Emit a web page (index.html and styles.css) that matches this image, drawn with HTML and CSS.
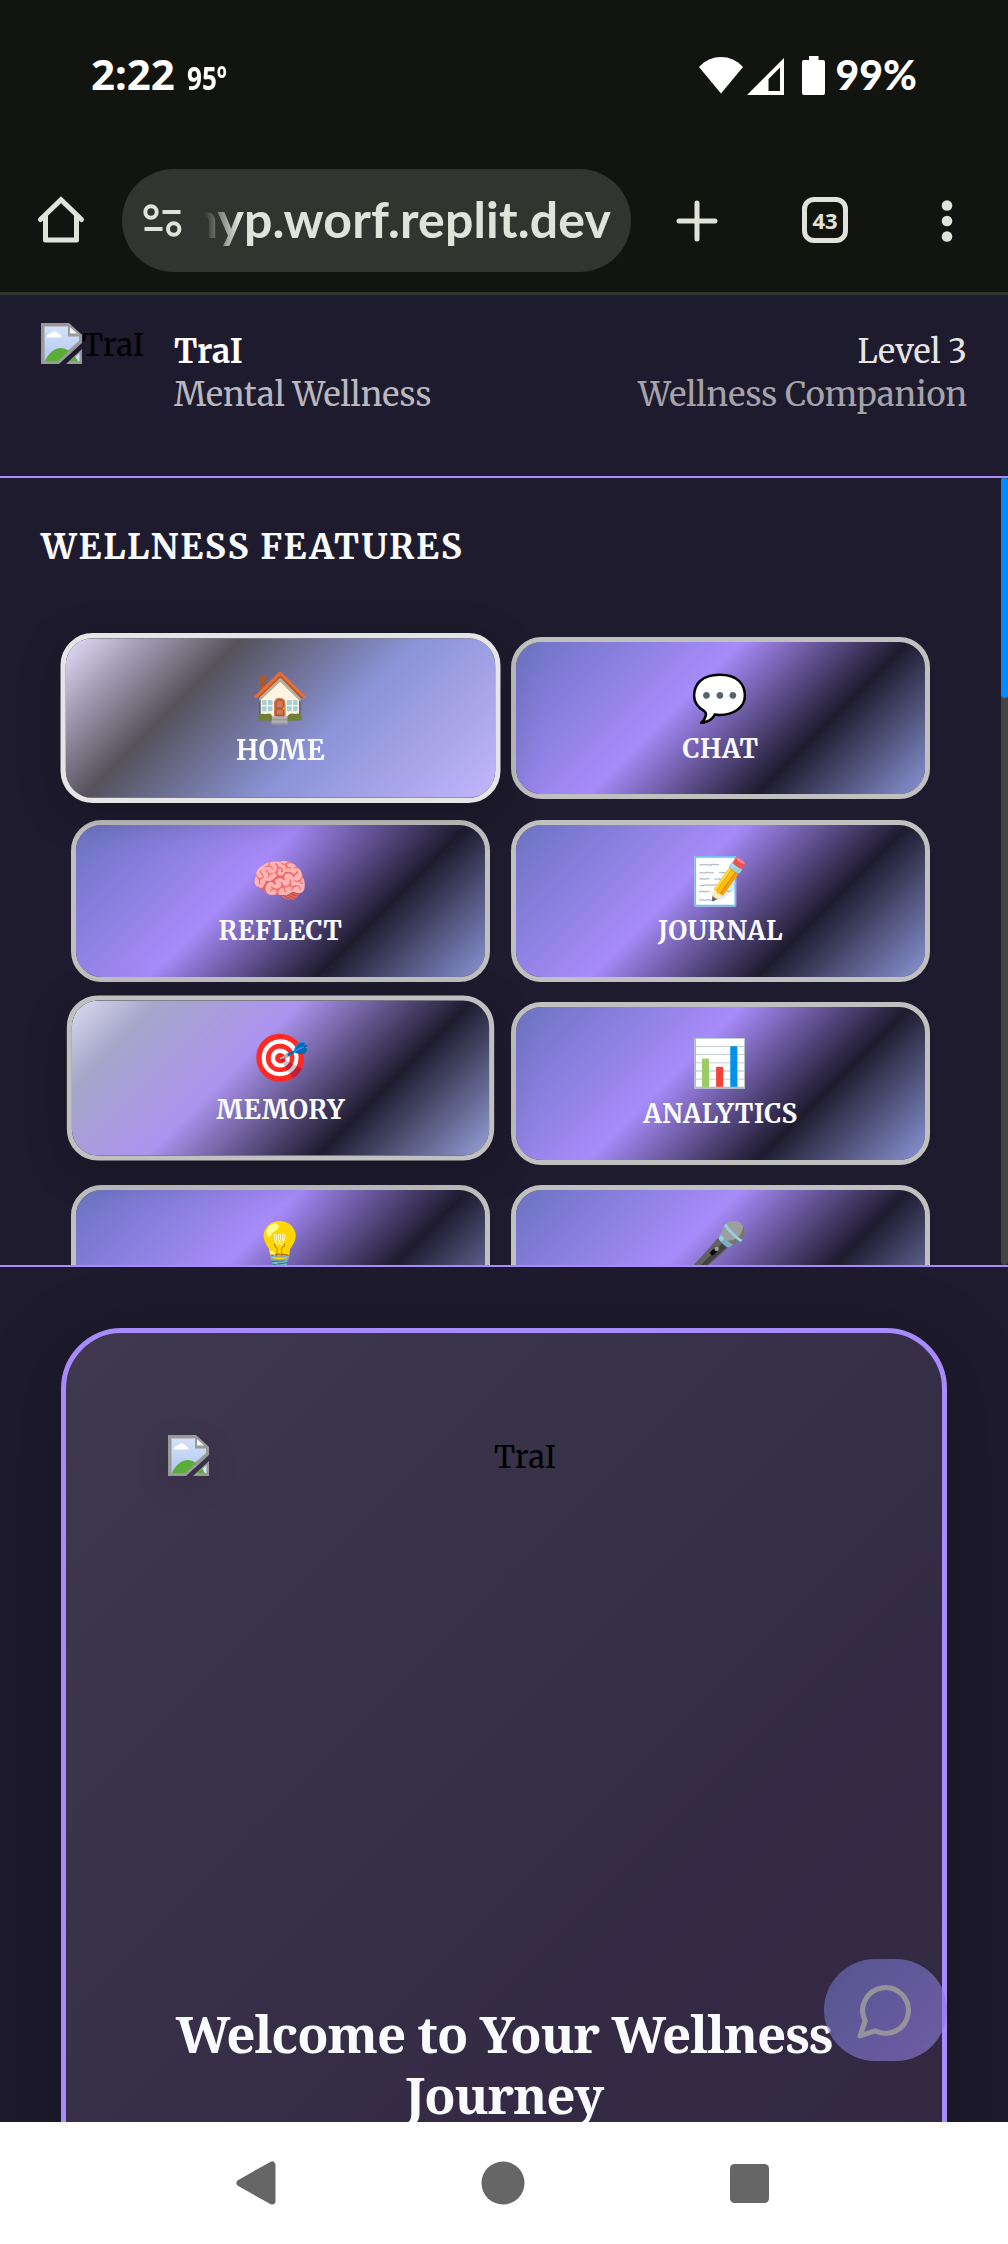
FILE: index.html
```html
<!DOCTYPE html>
<html lang="en">
<head>
<meta charset="utf-8">
<title>TraI</title>
<link rel="stylesheet" href="styles.css">
</head>
<body>
<svg class="defs" width="0" height="0" aria-hidden="true">
  <defs>
    <linearGradient id="sky" x1="0" y1="0" x2="0" y2="1">
      <stop offset="0" stop-color="#d3e1fa"/><stop offset="1" stop-color="#b4c7ee"/>
    </linearGradient>
  </defs>
  <symbol id="broken" viewBox="0 0 41 41">
    <path d="M0 0H28L41 12V20L18 41H0Z" fill="#999"/>
    <path d="M3.500 3.500H27V13.500H38V18L15 38H3.500Z" fill="url(#sky)"/>
    <path d="M4 38C8 29 14 25 20 25C23 25 26 26.500 28 28L17 38Z" fill="#5aae37"/>
    <path d="M5.500 14.500C6 11.500 8 10.500 10 10.500C11 7.500 16 7 17.500 11C19.500 11 20.500 13 20.500 14.500Z" fill="#fff"/>
    <path d="M28 2L39 11.500H28Z" fill="#f4f5f8" stroke="#999" stroke-width="2"/>
    <path d="M41 26V41H25Z" fill="#999"/>
    <path d="M38.500 30V38H30Z" fill="#d3e1fa"/>
    <path d="M29 38L34 33.500L37 38Z" fill="#5aae37"/>
  </symbol>
</svg>

<div class="status-bar">
  <div class="clock"><span class="time">2:22</span><span class="temp">95º</span></div>
  <div class="indicators">
    <svg class="wifi" width="44" height="37" viewBox="0 0 44 37"><path d="M22 36.500L0 10C12-3.300 32-3.300 44 10Z" fill="#fff"/></svg>
    <svg class="signal" width="37" height="37" viewBox="0 0 37 37"><path fill-rule="evenodd" d="M37 0V37H0ZM33 9.500L21.500 21V33H33Z" fill="#fff"/></svg>
    <svg class="battery" width="23" height="39" viewBox="0 0 23 39"><path d="M7 0H16.500V4H21Q23 4 23 6V37Q23 39 21 39H2Q0 39 0 37V6Q0 4 2 4H7Z" fill="#fff"/></svg>
    <span class="charge">99%</span>
  </div>
</div>

<div class="toolbar">
  <svg class="home" width="48" height="48" viewBox="0 0 48 48" fill="none" stroke="#e1e3da" stroke-width="5" stroke-linecap="round" stroke-linejoin="round"><path d="M3.500 23.500L24 3.700L44.500 23.500" stroke-linejoin="miter"/><path d="M8.500 20V44H39.500V20"/></svg>
  <div class="omnibox">
    <svg width="39" height="33" viewBox="0 0 39 33" fill="none" stroke="#e1e3da" stroke-width="4"><circle cx="8" cy="8" r="5.700"/><path d="M19.500 8H37.500M1.500 25H19.500"/><circle cx="30.700" cy="25" r="5.700"/></svg>
    <div class="url"><span>nyp.worf.replit.dev</span></div>
  </div>
  <svg class="plus" width="42" height="42" viewBox="0 0 42 42" stroke="#e1e3da" stroke-width="5" stroke-linecap="round"><path d="M21 3V39M3 21H39"/></svg>
  <div class="tabs">43</div>
  <svg class="dots" width="12" height="42" viewBox="0 0 12 42" fill="#e1e3da"><circle cx="6" cy="5.500" r="5.300"/><circle cx="6" cy="21" r="5.300"/><circle cx="6" cy="36.500" r="5.300"/></svg>
</div>

<header class="app-header">
  <div class="avatar"><svg width="41" height="41"><use href="#broken"/></svg><span>TraI</span></div>
  <div class="brand"><strong>TraI</strong><span>Mental Wellness</span></div>
  <div class="level"><b>Level 3</b><span>Wellness Companion</span></div>
</header>

<section class="features">
  <div class="features-body">
    <h2>WELLNESS FEATURES</h2>
    <div class="grid">
      <div class="tile active"><i>🏠</i><span>HOME</span></div>
      <div class="tile"><i>💬</i><span>CHAT</span></div>
      <div class="tile"><i>🧠</i><span>REFLECT</span></div>
      <div class="tile"><i>📝</i><span>JOURNAL</span></div>
      <div class="tile hover"><i>🎯</i><span>MEMORY</span></div>
      <div class="tile"><i>📊</i><span>ANALYTICS</span></div>
      <div class="tile"><i>💡</i></div>
      <div class="tile"><i>🎤</i></div>
    </div>
  </div>
  <div class="scrollbar"><div class="thumb"></div></div>
</section>

<main class="content">
  <div class="card">
    <div class="hero"><svg width="41" height="41"><use href="#broken"/></svg><span>TraI</span></div>
    <h1>Welcome to Your Wellness Journey</h1>
  </div>
  <div class="fab"><svg width="61" height="61" viewBox="0 0 24 24" fill="none" stroke="#d8d8d8" stroke-width="2" stroke-linecap="round" stroke-linejoin="round"><path d="M7.900 20A9 9 0 1 0 4 16.100L2 22Z"/></svg></div>
</main>

<nav class="system-nav">
  <svg width="40" height="44" viewBox="0 0 40 44"><path d="M4 22L36 4V40Z" fill="#666" stroke="#666" stroke-width="7" stroke-linejoin="round"/></svg>
  <svg width="44" height="44" viewBox="0 0 44 44"><circle cx="22" cy="22" r="21.500" fill="#666"/></svg>
  <svg width="39" height="39" viewBox="0 0 39 39"><rect width="39" height="39" rx="4.500" fill="#666"/></svg>
</nav>
</body>
</html>
```
FILE: styles.css
```css
* { box-sizing: border-box; }
body {
  margin: 0;
  width: 1008px;
  height: 2244px;
  overflow: hidden;
  display: flex;
  flex-direction: column;
  background: #1e1b2e;
  font-family: Merriweather, "Noto Serif", serif;
}
svg { display: block; flex: none; }
.defs { position: absolute; }

/* Browser and phone chrome */
.status-bar {
  height: 150px;
  flex: none;
  background: #12150f;
  color: #fff;
  padding: 0 91px;
  display: flex;
  justify-content: space-between;
}
.clock { display: flex; align-items: baseline; padding-top: 44px; }
.time { font: 700 42px/60px "Noto Sans", sans-serif; width: 96px; }
.temp {
  font: 700 33px/60px "Noto Sans", sans-serif;
  transform: scaleX(.79);
  transform-origin: 0 50%;
}
.indicators { display: flex; align-items: flex-start; padding-top: 44px; }
.wifi { margin-top: 13px; }
.signal { margin: 14px 18px 0 4px; }
.battery { margin: 12px 11px 0 0; }
.charge { font: 900 41px/62px Lato, sans-serif; }

.toolbar {
  height: 145px;
  flex: none;
  background: #12150f;
  border-bottom: 3px solid #31332d;
  padding: 19px 55px 0 37px;
  display: flex;
  align-items: flex-start;
}
.home { margin: 27px 37px 0 0; }
.omnibox {
  width: 509px;
  height: 103px;
  border-radius: 52px;
  background: #32352f;
  padding: 0 20px 0 21px;
  display: flex;
  align-items: center;
  justify-content: space-between;
}
.url {
  width: 407px;
  margin-top: -4px;
  overflow: hidden;
  display: flex;
  justify-content: flex-end;
  -webkit-mask-image: linear-gradient(90deg, transparent, #000 35px);
  mask-image: linear-gradient(90deg, transparent, #000 35px);
}
.url span {
  flex: none;
  font: 700 50px/70px Lato, sans-serif;
  letter-spacing: .150px;
  color: #e1e3da;
}
.plus { margin: 31px 84px 0 45px; }
.tabs {
  width: 46px;
  height: 46px;
  margin: 28px 93px 0 0;
  border: 5px solid #e1e3da;
  border-radius: 12px;
  color: #e1e3da;
  font: 700 22px/36px "Noto Sans", sans-serif;
  text-align: center;
}
.dots { margin-top: 31px; }

/* App header */
.app-header {
  height: 183px;
  flex: none;
  border-bottom: 2px solid #a78bfa;
  padding: 28px 41px 0;
  display: flex;
  align-items: flex-start;
}
.avatar { display: flex; width: 133px; }
.avatar span, .hero span { font-size: 30.500px; line-height: 40px; color: #000; }
.avatar span { padding-top: 2px; }
.brand, .level {
  display: flex;
  flex-direction: column;
  padding-top: 7px;
  font-size: 32.600px;
  line-height: 43px;
}
.brand strong { color: #fff; }
.brand span { color: #bab8bf; }
.level { margin-left: auto; text-align: right; }
.level b { font-weight: 400; color: #e5e5e5; }
.level span { color: #a5a3aa; }

/* Feature tiles */
.features {
  height: 789px;
  flex: none;
  border-bottom: 2px solid #a78bfa;
  display: flex;
  overflow: hidden;
}
.features-body { flex: 1; padding: 45px 71px 0; overflow: hidden; }
.features h2 {
  margin: 0 0 66px -30px;
  font-size: 35px;
  line-height: 48px;
  font-weight: 700;
  letter-spacing: 1.700px;
  color: #f8fafc;
}
.grid {
  display: grid;
  grid-template-columns: 419px 419px;
  grid-auto-rows: 162.200px;
  gap: 20.500px 21px;
}
.tile {
  border: 5px solid #c0c0c0;
  border-radius: 30.700px;
  background: linear-gradient(135deg, #6b73c1 0%, #a78bfa 40%, #1e1b2e 70%, #8b95d6 100%) padding-box;
  display: flex;
  flex-direction: column;
  align-items: center;
  padding-top: 26px;
}
.tile i { font: normal 46px/60px "Noto Color Emoji", sans-serif; }
.tile span {
  font-size: 26px;
  line-height: 36px;
  font-weight: 700;
  letter-spacing: .400px;
  color: #f8fafc;
  margin-top: 2.500px;
}
.tile.active {
  transform: scale(1.05);
  border-color: #e5e5e5;
  background: linear-gradient(135deg, #e6dffd 0%, #a59fb6 13%, #55525b 30%, #8a93d6 60%, #c4b5fd 100%) padding-box;
  box-shadow: 0 10px 40px rgba(0, 0, 0, .25);
}
.tile.hover {
  transform: translateY(-5px) scale(1.02);
  background: linear-gradient(135deg, #dcdcf2 0%, #a6a6c9 15%, #ac94f0 40%, #1e1b2e 70%, #97a1da 100%) padding-box;
  box-shadow: 0 10px 40px rgba(0, 0, 0, .25);
}
.scrollbar { width: 7px; background: #444; border-radius: 0 0 4px 4px; }
.thumb { height: 220px; border-radius: 4px; background: #008cf9; }

/* Welcome card */
.content {
  height: 855px;
  flex: none;
  padding: 61px 61px 0;
  position: relative;
  overflow: hidden;
}
.card {
  height: 1000px;
  border: 5px solid #a78bfa;
  border-radius: 61px;
  background: linear-gradient(135deg, #3f384e 0%, #39334a 30%, #342a45 65%, #31283f 100%) padding-box;
  box-shadow: 0 20px 80px rgba(0, 0, 0, .3);
  padding: 102px 102px 0;
}
.hero { display: flex; height: 568px; }
.hero svg { filter: drop-shadow(0 10px 15px rgba(0, 0, 0, .12)); }
.hero span { margin-left: 285px; padding-top: 2px; }
.card h1 {
  margin: 0 -10px;
  font: 700 51.200px/61.400px "Noto Serif", serif;
  letter-spacing: -1.100px;
  text-align: center;
  color: #f8fafc;
}
.fab {
  position: absolute;
  left: 824px;
  top: 692px;
  width: 123px;
  height: 102px;
  border-radius: 51px;
  background: linear-gradient(135deg, #6b73c1, #997fe8);
  opacity: .6;
  display: flex;
  align-items: center;
  justify-content: center;
}

/* System navigation */
.system-nav {
  flex: 1;
  background: #fff;
  padding: 0 239px 0 236px;
  display: flex;
  align-items: center;
  justify-content: space-between;
}
```
